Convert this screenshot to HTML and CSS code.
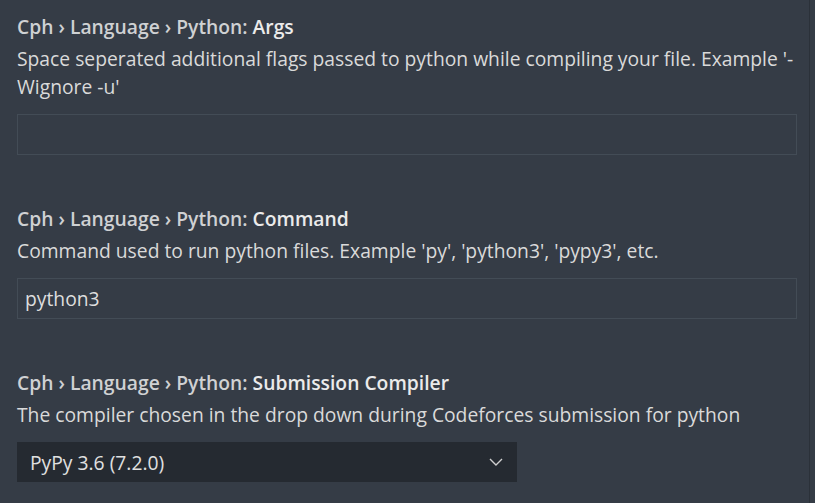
FILE: index.html
```html
<!DOCTYPE html>
<html>
<head>
<meta charset="utf-8">
<link rel="stylesheet" href="styles.css">
</head>
<body>
<div class="editor">
  <div class="settings">
    <div class="setting">
      <div class="title"><span class="cat">Cph › Language › Python: </span><span class="key">Args</span></div>
      <div class="desc">Space seperated additional flags passed to python while compiling your file. Example '-Wignore -u'</div>
      <div class="input wide"></div>
    </div>
    <div class="setting">
      <div class="title"><span class="cat">Cph › Language › Python: </span><span class="key">Command</span></div>
      <div class="desc">Command used to run python files. Example 'py', 'python3', 'pypy3', etc.</div>
      <div class="input wide">python3</div>
    </div>
    <div class="setting">
      <div class="title"><span class="cat">Cph › Language › Python: </span><span class="key">Submission Compiler</span></div>
      <div class="desc">The compiler chosen in the drop down during Codeforces submission for python</div>
      <div class="select"><span>PyPy 3.6 (7.2.0)</span><svg class="chev" width="14" height="8" viewBox="0 0 14 8"><path d="M1 1 L7 7 L13 1" fill="none" stroke="#d0d0d0" stroke-width="1.4"/></svg></div>
    </div>
  </div>
  <div class="divider"></div>
</div>
</body>
</html>
```
FILE: styles.css
```css
html, body {
  margin: 0;
  padding: 0;
  background: #353c46;
  height: 100%;
  overflow: hidden;
}
body {
  font-family: "Segoe UI", "Open Sans", "Noto Sans", sans-serif;
  font-size: 19.3px;
  color: #dcdcdc;
}
.editor {
  display: flex;
  height: 100%;
}
.settings {
  width: 780px;
  padding: 13px 12px 0 17px;
  display: flex;
  flex-direction: column;
  gap: 50px;
}
.divider {
  width: 1px;
  background: #2b3139;
}
.setting {
  display: flex;
  flex-direction: column;
}
.title {
  line-height: 28px;
  font-weight: 600;
}
.cat {
  color: #cfd1d3;
}
.key {
  color: #ebebeb;
  font-weight: 600;
}
.desc {
  margin-top: 4px;
  line-height: 28px;
  color: #dadada;
}
.input {
  margin-top: 13px;
  height: 39px;
  border: 1px solid #434c56;
  box-sizing: content-box;
  padding: 0 7px;
  display: flex;
  align-items: center;
  color: #dedede;
}
.wide {
  width: auto;
}
.select {
  margin-top: 13px;
  width: 500px;
  height: 40px;
  background: #252a31;
  box-sizing: border-box;
  padding: 0 14px 0 13px;
  display: flex;
  align-items: center;
  justify-content: space-between;
  color: #e0e0e0;
}
.chev {
  display: block;
}
```
